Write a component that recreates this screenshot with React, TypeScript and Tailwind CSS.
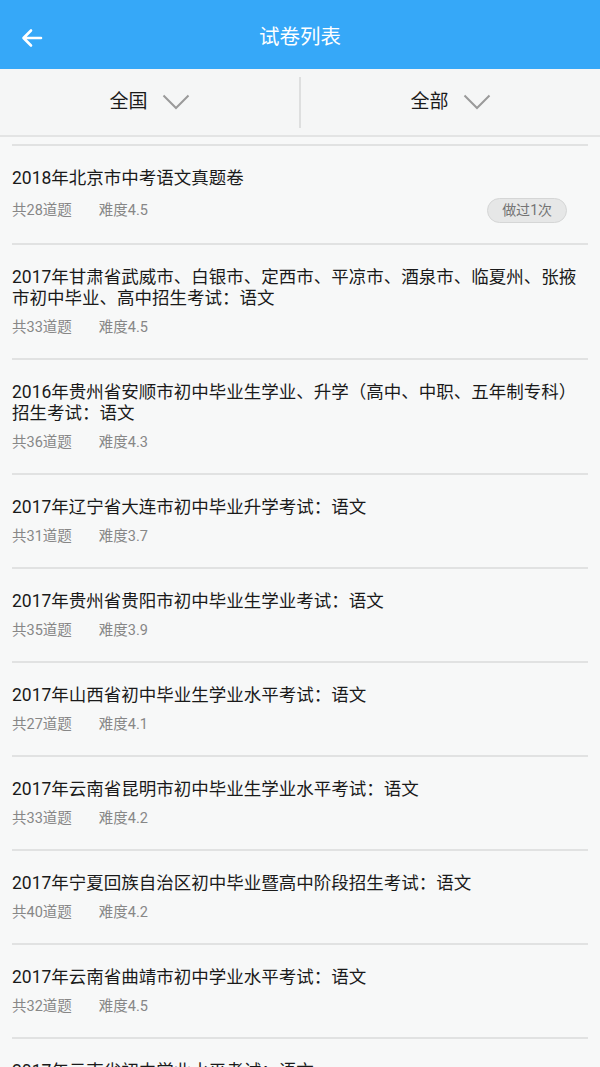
import React from 'react';

interface Paper {
  title: string;
  count: number;
  level: string;
  done?: number;
}

const papers: Paper[] = [
  { title: '2018年北京市中考语文真题卷', count: 28, level: '4.5', done: 1 },
  {
    title: '2017年甘肃省武威市、白银市、定西市、平凉市、酒泉市、临夏州、张掖\n市初中毕业、高中招生考试：语文',
    count: 33,
    level: '4.5',
  },
  {
    title: '2016年贵州省安顺市初中毕业生学业、升学（高中、中职、五年制专科）\n招生考试：语文',
    count: 36,
    level: '4.3',
  },
  { title: '2017年辽宁省大连市初中毕业升学考试：语文', count: 31, level: '3.7' },
  { title: '2017年贵州省贵阳市初中毕业生学业考试：语文', count: 35, level: '3.9' },
  { title: '2017年山西省初中毕业生学业水平考试：语文', count: 27, level: '4.1' },
  { title: '2017年云南省昆明市初中毕业生学业水平考试：语文', count: 33, level: '4.2' },
  { title: '2017年宁夏回族自治区初中毕业暨高中阶段招生考试：语文', count: 40, level: '4.2' },
  { title: '2017年云南省曲靖市初中学业水平考试：语文', count: 32, level: '4.5' },
  { title: '2017年云南省初中学业水平考试：语文', count: 30, level: '4.4' },
];

function Chevron() {
  return (
    <svg width="28" height="16" viewBox="0 0 28 16" fill="none" className="ml-[14px]">
      <path d="M1.5 1.5 L14 14 L26.5 1.5" stroke="#9a9a9a" strokeWidth="2" />
    </svg>
  );
}

function PaperItem({ paper }: { paper: Paper }) {
  return (
    <div className="mx-3 border-t-2 border-[#e1e2e2] pt-[22px] pb-[20px]">
      <div className="text-[17.5px] leading-[21px] text-[#1a1a1a] whitespace-pre-line">
        {paper.title}
      </div>
      <div className="mt-[9px] flex items-center min-h-[20px]">
        <span className="text-[14.5px] leading-[20px] text-[#878787]">共{paper.count}道题</span>
        <span className="ml-[27px] text-[14.5px] leading-[20px] text-[#878787]">难度{paper.level}</span>
        {paper.done && (
          <span className="ml-auto mr-[21px] h-[25px] px-[14px] flex items-center rounded-full bg-[#e6e7e7] border border-[#d5d6d6] text-[14px] text-[#747474]">
            做过{paper.done}次
          </span>
        )}
      </div>
    </div>
  );
}

export default function App() {
  return (
    <div
      className="w-[600px] h-[1067px] overflow-hidden bg-[#f7f8f8]"
      style={{ fontFamily: "Roboto, 'Noto Sans CJK SC', sans-serif" }}
    >
      {/* Header */}
      <div className="h-[69px] pt-[6px] bg-[#36a8f8] flex items-center relative">
        <svg width="24" height="24" viewBox="0 0 24 24" fill="none" className="ml-[20px]">
          <path d="M21 12 H4 M11 4.5 L3.5 12 L11 19.5" stroke="#fff" strokeWidth="2.6" strokeLinecap="round" strokeLinejoin="round" />
        </svg>
        <div className="absolute inset-0 pt-[6px] flex items-center justify-center text-white text-[20.5px] pointer-events-none">
          试卷列表
        </div>
      </div>

      {/* Filters */}
      <div className="h-[68px] bg-[#f5f6f6] border-b-2 border-[#e3e4e4] flex items-center">
        <div className="flex-1 flex items-center justify-center text-[19px] text-[#1a1a1a]">
          全国
          <Chevron />
        </div>
        <div className="w-[2px] h-[51px] bg-[#dedfdf]" />
        <div className="flex-1 flex items-center justify-center text-[19px] text-[#1a1a1a]">
          全部
          <Chevron />
        </div>
      </div>

      {/* List */}
      <div className="pt-[7px]">
        {papers.map((p, idx) => (
          <PaperItem key={idx} paper={p} />
        ))}
      </div>
    </div>
  );
}
